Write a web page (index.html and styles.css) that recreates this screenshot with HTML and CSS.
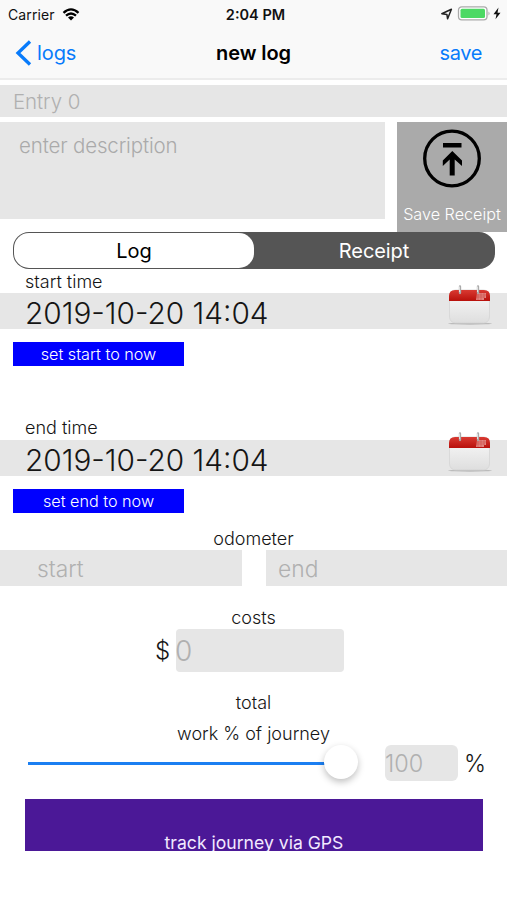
FILE: index.html
```html
<!DOCTYPE html>
<html lang="en">
<head>
<meta charset="utf-8">
<title>new log</title>
<link rel="stylesheet" href="styles.css">
</head>
<body>
<main class="screen">
  <header class="header">
    <div class="status">
      <div class="carrier"><span class="carrier-name">Carrier</span>
        <svg width="18" height="13" viewBox="0 0 18 13" fill="none" stroke="#000" stroke-width="2.3"><path d="M1.5 4.8Q9-2 16.500 4.800"/><path d="M4 7.700Q9 3.200 14 7.700"/><path d="M9 12.500L6 9.500Q9 7.100 12 9.500Z" fill="#000" stroke="none"/></svg>
      </div>
      <div class="clock">2:04 PM</div>
      <div class="indicators">
        <svg width="62" height="16" viewBox="0 0 62 16"><path d="M1.800 7.700L11.400 3.200L7.600 12.800L6.900 8.400Z" fill="none" stroke="#222" stroke-width="1.500" stroke-linejoin="round"/><rect x="18.500" y=".8" width="28.500" height="13" rx="3.300" fill="#fff" stroke="#aaa" stroke-width="1.300"/><rect x="20.500" y="2.700" width="24.500" height="9.300" rx="1.500" fill="#4cd964"/><path d="M48.500 5.500q2.200 1.800 0 4z" fill="#aaa"/><path d="M58.500 1.500L53.500 8.200H56.500L55.500 13.300L60.500 6.800H57.500Z" fill="#111"/></svg>
      </div>
    </div>
    <nav class="nav">
      <a class="back"><svg width="17" height="28" viewBox="0 0 17 28" fill="none" stroke="#087bfb" stroke-width="3.300"><path d="M15 2.500L3 14L15 25.500"/></svg><span class="back-label">logs</span></a>
      <h1 class="title">new log</h1>
      <a class="save">save</a>
    </nav>
  </header>

  <div class="entry">Entry 0</div>
  <section class="details">
    <div class="description">enter description</div>
    <div class="receipt">
      <svg width="60" height="60" viewBox="0 0 60 60"><circle cx="30" cy="30.500" r="27.300" fill="none" stroke="#000" stroke-width="3.300"/><path d="M21 15h18.500v4.500H21z"/><path d="M30.300 23L40 32.500V38L32.700 31.500V47.500H27.700V31.500L20.800 38V32.500Z"/></svg>
      <span class="receipt-label">Save Receipt</span>
    </div>
  </section>
  <div class="segments"><span class="segment selected">Log</span><span class="segment">Receipt</span></div>

  <section class="time">
    <div class="label">start time</div>
    <div class="date-row"><span class="date">2019-10-20 14:04</span>
      <svg class="calendar" width="46" height="42" viewBox="0 0 46 42"><defs><linearGradient id="paper" x2="0" y2="1"><stop stop-color="#fafafa"/><stop offset="1" stop-color="#dedede"/></linearGradient><linearGradient id="red" x2="0" y2="1"><stop stop-color="#d93a32"/><stop offset="1" stop-color="#b8100b"/></linearGradient></defs><ellipse cx="23" cy="38.500" rx="22" ry="1.200" fill="#bbb"/><rect x="2.500" y="5" width="40" height="33" rx="6" fill="url(#paper)" stroke="#d2d2d2" stroke-width=".7"/><path d="M2 16V11Q2 5 8 5H37Q43 5 43 11V16Z" fill="url(#red)"/><path d="M30 8h9v5h-2v2h-8z" fill="#e18480"/><path d="M29 10h10M29 12h9M31 8v7M34 8v7M37 8v5" stroke="#c8443e" stroke-width=".5"/><path d="M13 1.500V8M31 1.500V8" stroke="#aaa" stroke-width="2.300" stroke-linecap="round"/><path d="M12.500 1.500V7M30.500 1.500V7" stroke="#eee" stroke-width=".8"/></svg>
    </div>
    <div class="now start-now">set start to now</div>
  </section>
  <section class="time">
    <div class="label end-label">end time</div>
    <div class="date-row"><span class="date">2019-10-20 14:04</span>
      <svg class="calendar" width="46" height="42" viewBox="0 0 46 42"><ellipse cx="23" cy="38.500" rx="22" ry="1.200" fill="#bbb"/><rect x="2.500" y="5" width="40" height="33" rx="6" fill="url(#paper)" stroke="#d2d2d2" stroke-width=".7"/><path d="M2 16V11Q2 5 8 5H37Q43 5 43 11V16Z" fill="url(#red)"/><path d="M30 8h9v5h-2v2h-8z" fill="#e18480"/><path d="M29 10h10M29 12h9M31 8v7M34 8v7M37 8v5" stroke="#c8443e" stroke-width=".5"/><path d="M13 1.500V8M31 1.500V8" stroke="#aaa" stroke-width="2.300" stroke-linecap="round"/><path d="M12.500 1.500V7M30.500 1.500V7" stroke="#eee" stroke-width=".8"/></svg>
    </div>
    <div class="now end-now">set end to now</div>
  </section>

  <section class="odometer">
    <div class="caption">odometer</div>
    <div class="odometer-fields"><div class="field start">start</div><div class="field end">end</div></div>
  </section>
  <section class="costs">
    <div class="caption">costs</div>
    <div class="cost-row"><span class="dollar">$</span><div class="cost-field">0</div></div>
  </section>
  <div class="caption total">total</div>
  <div class="caption work">work % of journey</div>
  <div class="slider-row">
    <div class="slider"><div class="track"></div><div class="thumb"></div></div>
    <div class="percent-field">100</div><span class="percent">%</span>
  </div>
  <div class="gps"><span class="gps-label">track journey via GPS</span></div>
</main>
</body>
</html>
```
FILE: styles.css
```css
* { box-sizing: border-box; }
body { margin: 0; background: #fff; color: #151515; }
.screen { width: 507px; height: 900px; overflow: hidden; font-family: Inter, "Liberation Sans", sans-serif; font-weight: 300; white-space: nowrap; }
.header { height: 80px; background: #f9f9f9; border-bottom: 2px solid #ececec; }
.status { height: 28px; padding: 0 5px 0 8px; display: grid; grid-template-columns: 1fr 80px 1fr; align-items: center; color: #111; }
.carrier { display: flex; align-items: center; gap: 7px; font-size: 14px; font-weight: 400; }
.carrier-name { letter-spacing: .1px; }
.clock { padding-left: 1px; font-size: 14.500px; font-weight: 600; text-align: center; }
.indicators { display: flex; justify-content: flex-end; }
.nav { height: 50px; padding: 0 25px 0 15px; display: grid; grid-template-columns: 1fr 100px 1fr; align-items: center; font-size: 20px; font-weight: 400; color: #087bfb; }
.back { display: flex; align-items: center; gap: 5px; letter-spacing: -.1px; }
.title { margin: 0 -10px 0 0; color: #000; font-size: 20px; font-weight: 600; text-align: center; letter-spacing: -.1px; }
.save { text-align: right; letter-spacing: -.4px; }
.entry { margin-top: 5px; height: 32px; padding-left: 13px; background: #e6e6e6; color: #b0b0b0; font-size: 20.500px; line-height: 33px; letter-spacing: -.1px; }
.details { margin-top: 5px; height: 110px; display: flex; justify-content: space-between; align-items: flex-start; }
.description { width: 385px; height: 97px; padding: 11px 19px; background: #e6e6e6; color: #aaa; font-size: 20.500px; line-height: 26px; letter-spacing: -.15px; }
.receipt { width: 110px; height: 110px; padding-top: 6px; background: #aaa; color: #fff; display: flex; flex-direction: column; align-items: center; }
.receipt-label { margin-top: 15px; font-size: 16.200px; line-height: 22px; }
.segments { width: 482px; height: 37px; margin-left: 13px; padding: 1px; border-radius: 16px; background: #555; display: flex; font-size: 20px; font-weight: 400; line-height: 36px; text-align: center; color: #fff; }
.segment { flex: 1; border-radius: 15px; letter-spacing: -.1px; }
.selected { background: #fff; color: #000; }
.time { height: 147px; }
.label { height: 24px; padding: 2px 0 0 25px; font-size: 18px; line-height: 22px; }
.end-label { padding-top: 1px; }
.date-row { height: 36px; padding: 0 14px 0 25px; display: flex; justify-content: space-between; align-items: center; background: #e6e6e6; }
.date { padding-top: 3px; font-size: 29.800px; line-height: 36px; }
.calendar { margin-top: -11px; }
.now { width: 171px; height: 24px; margin: 13px 0 0 13px; background: #00f; color: #fff; font-size: 16.200px; line-height: 25px; text-align: center; }
.odometer { height: 59px; margin-top: -36px; padding-top: 1px; }
.caption { font-size: 18px; line-height: 22px; text-align: center; }
.odometer-fields { display: flex; justify-content: space-between; }
.field { height: 36px; background: #e6e6e6; color: #b0b0b0; font-size: 22.800px; line-height: 38px; }
.start { width: 242px; padding-left: 37px; }
.end { width: 241px; padding-left: 12px; }
.costs { height: 65px; margin-top: 21px; }
.cost-row { height: 43px; display: flex; padding-left: 155px; }
.dollar { width: 21px; font-size: 24px; line-height: 44px; }
.cost-field { width: 168px; border-radius: 4px; background: #e6e6e6; color: #b0b0b0; font-size: 28px; line-height: 45px; text-indent: -1px; }
.total { margin-top: 20px; }
.work { margin-top: 9px; }
.slider-row { height: 36px; display: flex; align-items: center; padding-left: 28px; }
.slider { width: 330px; height: 36px; display: flex; align-items: center; margin-right: 27px; }
.track { width: 297px; height: 3px; background: #1b7ff2; }
.thumb { width: 34px; height: 34px; flex: none; margin: -2px 0 0 -1px; border-radius: 50%; background: #fff; box-shadow: 0 3px 7px rgba(0,0,0,.25); }
.percent-field { width: 73px; height: 36px; border-radius: 6px; background: #e6e6e6; color: #b0b0b0; font-size: 23.500px; line-height: 38px; }
.percent { margin-left: 6px; padding-top: 2px; font-size: 23.500px; line-height: 38px; }
.gps { width: 458px; height: 52px; margin: 18px 0 0 25px; padding-top: 31px; overflow: hidden; background: #4b1897; color: #f3e9ff; font-size: 17.600px; font-weight: 400; line-height: 26px; text-align: center; }
```
